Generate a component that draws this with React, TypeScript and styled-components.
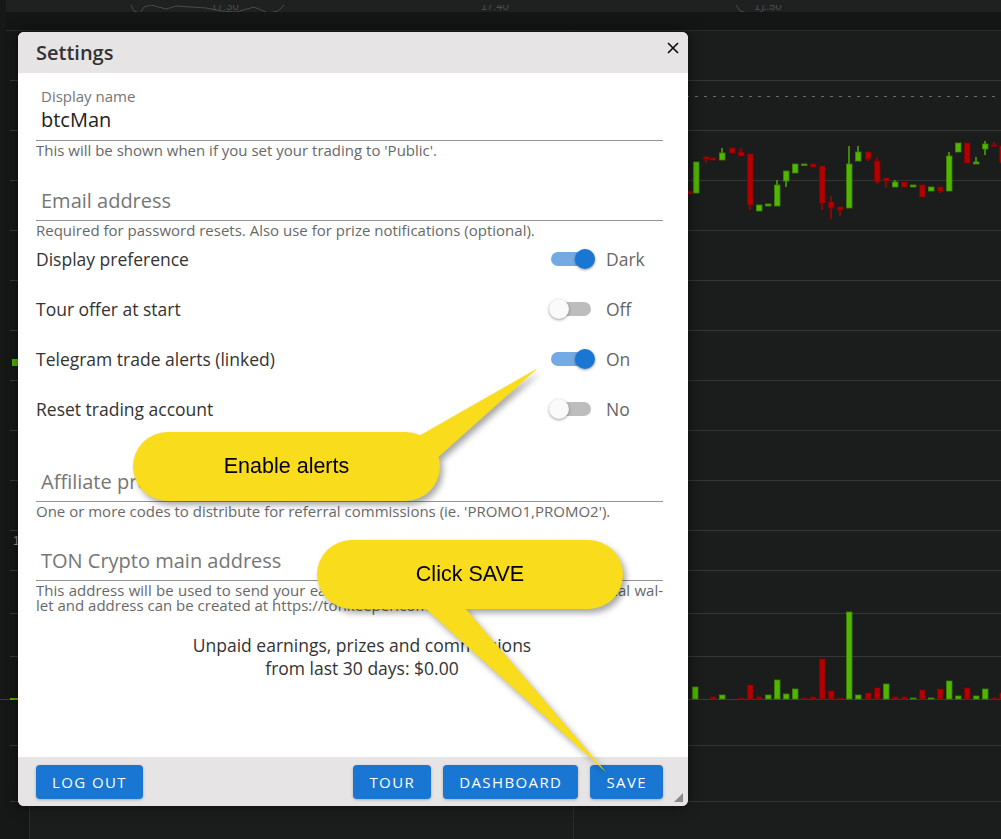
import React from 'react';
import styled, { createGlobalStyle } from 'styled-components';

const GlobalStyle = createGlobalStyle`
  html, body {
    margin: 0;
    padding: 0;
    background: #161717;
  }
  body {
    font-family: 'Open Sans', 'Liberation Sans', sans-serif;
  }
  * {
    box-sizing: border-box;
  }
`;

type Candle = [number, number, number, number, number, 'g' | 'r'];
type Bar = [number, number, 'g' | 'r'];

const candles: Candle[] = [
  [686, 191, 194, 191, 194, 'r'],
  [693, 162, 193, 162, 193, 'g'],
  [703, 157, 159, 156, 163, 'r'],
  [710, 158, 160, 158, 160, 'r'],
  [719, 153, 160, 148, 160, 'g'],
  [729, 148, 153, 148, 153, 'r'],
  [738, 152, 156, 148, 156, 'r'],
  [747, 154, 205, 154, 210, 'r'],
  [756, 205, 211, 205, 211, 'g'],
  [765, 204, 206, 204, 206, 'g'],
  [774, 185, 206, 180, 206, 'g'],
  [783, 171, 181, 171, 187, 'g'],
  [792, 164, 173, 164, 173, 'g'],
  [801, 164, 165, 164, 165, 'g'],
  [810, 164, 167, 164, 167, 'r'],
  [819, 166, 203, 166, 210, 'r'],
  [828, 202, 208, 196, 219, 'r'],
  [837, 207, 210, 207, 216, 'r'],
  [846, 164, 208, 146, 208, 'g'],
  [855, 152, 161, 146, 161, 'g'],
  [865, 152, 159, 152, 161, 'r'],
  [874, 161, 182, 157, 184, 'r'],
  [883, 178, 181, 178, 188, 'r'],
  [892, 182, 187, 180, 187, 'g'],
  [901, 182, 187, 182, 187, 'r'],
  [910, 185, 187, 185, 187, 'g'],
  [919, 185, 197, 185, 197, 'r'],
  [928, 187, 191, 187, 191, 'g'],
  [937, 187, 191, 187, 193, 'r'],
  [946, 156, 191, 152, 191, 'g'],
  [955, 143, 152, 143, 152, 'g'],
  [964, 143, 163, 143, 163, 'r'],
  [973, 162, 164, 157, 164, 'g'],
  [982, 144, 149, 141, 155, 'g'],
  [991, 145, 146, 142, 146, 'r'],
  [999, 146, 163, 146, 163, 'r'],
];

const volumes: Bar[] = [
  [692, 687, 'g'], [710, 697, 'r'], [719, 695, 'g'], [738, 698, 'r'], [747, 685, 'r'],
  [756, 697, 'r'], [765, 695, 'g'], [774, 680, 'g'], [783, 694, 'g'], [792, 689, 'g'],
  [801, 698, 'r'], [810, 697, 'r'], [819, 659, 'r'], [828, 691, 'r'], [837, 698, 'r'],
  [846, 612, 'g'], [855, 695, 'g'], [865, 693, 'r'], [874, 688, 'r'], [883, 684, 'g'],
  [892, 697, 'r'], [901, 697, 'r'], [910, 698, 'g'], [919, 690, 'r'], [928, 698, 'g'],
  [937, 689, 'r'], [946, 681, 'g'], [955, 696, 'g'], [964, 688, 'r'], [973, 696, 'g'],
  [982, 689, 'g'], [991, 698, 'r'], [999, 693, 'r'],
];

const FILL = { g: '#52b500', r: '#b30000' };
const EDGE = { g: '#3b8500', r: '#860000' };

const gridRows = [80, 130, 180, 230, 280, 330, 380, 430, 480, 530, 570, 613, 656, 745, 801];

const Page = styled.div`
  position: relative;
  width: 100vw;
  height: 100vh;
  overflow: hidden;
  display: flex;
  flex-direction: column;
  background: #161717;
`;

const TopStrip = styled.div`
  height: 12px;
  margin-left: 6px;
  background: #1f2020;
  overflow: hidden;
`;

const Band = styled.div`
  height: 19px;
  margin-left: 6px;
  background: #141515;
  border-bottom: 1px solid #2c2d2d;
`;

const ChartSvg = styled.svg`
  display: block;
  flex: 1;
`;

const Dialog = styled.div`
  position: absolute;
  left: 18px;
  top: 32px;
  width: 670px;
  height: 774px;
  display: flex;
  flex-direction: column;
  background: #ffffff;
  border-radius: 6px;
  overflow: hidden;
  box-shadow: 0 0 14px rgba(0, 0, 0, 0.55);
`;

const Header = styled.div`
  height: 41px;
  flex: none;
  display: flex;
  justify-content: space-between;
  align-items: center;
  padding: 0 9px 0 18px;
  background: #e6e4e5;
`;

const Title = styled.div`
  font-size: 20px;
  font-weight: 600;
  color: #333333;
`;

const CloseButton = styled.button`
  align-self: flex-start;
  margin-top: 10px;
  width: 12px;
  height: 12px;
  padding: 0;
  border: none;
  background: none;
  display: flex;
  cursor: pointer;
`;

const Body = styled.div`
  flex: 1;
  display: flex;
  flex-direction: column;
  padding: 0 25px 0 18px;
`;

const Field = styled.div<{ $top: number }>`
  padding-top: ${p => p.$top}px;
`;

const FieldLabel = styled.div`
  font-size: 15px;
  line-height: 18px;
  color: #757575;
  padding-left: 5px;
`;

const InputLine = styled.div<{ $placeholder?: boolean }>`
  margin-top: ${p => (p.$placeholder ? 0 : 2)}px;
  padding: 0 5px ${p => (p.$placeholder ? 6 : 7)}px;
  font-size: 20px;
  line-height: 26px;
  color: ${p => (p.$placeholder ? '#767676' : '#222222')};
  border-bottom: 1px solid #949494;
`;

const Helper = styled.div`
  margin-top: 2px;
  font-size: 15px;
  line-height: 15px;
  color: #686868;
`;

const JustifiedLine = styled.div`
  text-align: justify;
  text-align-last: justify;
  white-space: nowrap;
`;

const ToggleList = styled.div`
  display: flex;
  flex-direction: column;
  gap: 8px;
`;

const ToggleRow = styled.div`
  height: 42px;
  display: flex;
  align-items: center;
`;

const RowLabel = styled.div`
  flex: 1;
  font-size: 17.5px;
  color: #333333;
`;

const SwitchArea = styled.div`
  width: 112px;
  display: flex;
  align-items: center;
  gap: 15px;
`;

const Track = styled.span<{ $on: boolean }>`
  position: relative;
  width: 40px;
  height: 14px;
  border-radius: 7px;
  background: ${p => (p.$on ? '#74aae4' : '#bdbdbd')};
`;

const Thumb = styled.span<{ $on: boolean }>`
  position: absolute;
  top: -3px;
  left: ${p => (p.$on ? 24 : -2)}px;
  width: 20px;
  height: 20px;
  border-radius: 50%;
  background: ${p => (p.$on ? '#1976d2' : '#fafafa')};
  box-shadow: 0 1px 3px rgba(0, 0, 0, 0.4);
`;

const SwitchText = styled.span`
  font-size: 17.5px;
  color: #666666;
`;

const Summary = styled.div`
  margin-top: 21px;
  padding-left: 25px;
  text-align: center;
  font-size: 17.5px;
  line-height: 23px;
  color: #333333;
`;

const Footer = styled.div`
  position: relative;
  height: 49px;
  flex: none;
  display: flex;
  align-items: center;
  gap: 12px;
  padding: 0 25px 0 18px;
  background: #e6e4e5;
`;

const Spacer = styled.div`
  flex: 1;
`;

const Button = styled.button`
  height: 34px;
  padding: 0 16px;
  border: none;
  border-radius: 4px;
  background: #1976d2;
  color: #ffffff;
  font-family: 'Open Sans', 'Liberation Sans', sans-serif;
  font-size: 15px;
  font-weight: 500;
  letter-spacing: 1.4px;
  text-transform: uppercase;
  box-shadow: 0 1px 3px rgba(0, 0, 0, 0.25);
  cursor: pointer;
`;

const Grip = styled.svg`
  position: absolute;
  right: 5px;
  bottom: 4px;
`;

const CalloutBox = styled.div<{ $x: number; $y: number; $w: number; $h: number }>`
  position: absolute;
  left: ${p => p.$x}px;
  top: ${p => p.$y}px;
  width: ${p => p.$w}px;
  height: ${p => p.$h}px;
  filter: drop-shadow(3px 4px 3px rgba(0, 0, 0, 0.35));
`;

const Pill = styled.div`
  position: relative;
  width: 100%;
  height: 100%;
  border-radius: 999px;
  background: #f9dc1c;
  display: flex;
  align-items: center;
  justify-content: center;
  font-family: 'Liberation Sans', Arial, sans-serif;
  font-size: 21.5px;
  color: #000000;
`;

const Tail = styled.svg`
  position: absolute;
  left: 0;
  top: 0;
  overflow: visible;
`;

type CalloutProps = {
  x: number;
  y: number;
  w: number;
  h: number;
  tail: [number, number][];
  text: string;
};

const Callout = ({ x, y, w, h, tail, text }: CalloutProps) => (
  <CalloutBox $x={x} $y={y} $w={w} $h={h}>
    <Tail width={w} height={h}>
      <polygon points={tail.map(([px, py]) => `${px - x},${py - y}`).join(' ')} fill="#f9dc1c" />
    </Tail>
    <Pill>{text}</Pill>
  </CalloutBox>
);

const Switch = ({ on, text }: { on: boolean; text: string }) => (
  <SwitchArea>
    <Track $on={on}>
      <Thumb $on={on} />
    </Track>
    <SwitchText>{text}</SwitchText>
  </SwitchArea>
);

const toggles = [
  { label: 'Display preference', on: true, text: 'Dark' },
  { label: 'Tour offer at start', on: false, text: 'Off' },
  { label: 'Telegram trade alerts (linked)', on: true, text: 'On' },
  { label: 'Reset trading account', on: false, text: 'No' },
];

const ChartBackdrop = () => (
  <ChartSvg width={1001} height={808} viewBox="0 31 1001 808">
    <rect x={29} y={31} width={972} height={808} fill="#1b1c1c" />
    <line x1={29.5} y1={31} x2={29.5} y2={839} stroke="#2b2c2c" />
    <line x1={573.5} y1={31} x2={573.5} y2={839} stroke="#2b2c2c" />
    {gridRows.map(y => (
      <g key={y}>
        <line x1={29} y1={y + 0.5} x2={1001} y2={y + 0.5} stroke="#343535" />
        <line x1={10} y1={y + 0.5} x2={29} y2={y + 0.5} stroke="#3a3b3b" />
      </g>
    ))}
    <line x1={29} y1={96.5} x2={1001} y2={96.5} stroke="#6a6a6a" strokeDasharray="3 6" />
    <line x1={0} y1={699.5} x2={1001} y2={699.5} stroke="#3a3b3b" />
    <line x1={10} y1={699} x2={18} y2={699} stroke="#52b500" strokeWidth={2} />
    <rect x={12} y={359} width={8} height={7} fill="#52b500" />
    <text x={13} y={545} fill="#9a9a9a" fontSize={12} fontFamily="'Liberation Sans', sans-serif">1</text>
    {candles.map(([x, top, bottom, wt, wb, c]) => (
      <g key={x}>
        <line x1={x + 3} y1={wt} x2={x + 3} y2={wb} stroke={FILL[c]} strokeWidth={1.4} />
        <rect x={x + 0.5} y={top} width={5.5} height={Math.max(bottom - top, 1.5)} fill={FILL[c]} stroke={EDGE[c]} strokeWidth={0.8} />
      </g>
    ))}
    {volumes.map(([x, top, c]) => (
      <rect key={x} x={x + 0.5} y={top} width={5.5} height={699 - top} fill={FILL[c]} stroke={EDGE[c]} strokeWidth={0.8} />
    ))}
  </ChartSvg>
);

export default function App() {
  return (
    <Page>
      <GlobalStyle />
      <TopStrip>
        <svg width={995} height={12}>
          <polyline points="125,0 128,6 134,8 138,2 145,0 160,4 170,1 200,3 215,6 230,7 248,2 262,8 272,6 278,0" fill="none" stroke="#4a4b4b" />
          <polyline points="730,0 734,6 742,8 752,8 760,4" fill="none" stroke="#4a4b4b" />
          <text x={205} y={5} fill="#4e4f4f" fontSize={11} fontFamily="'Liberation Sans', sans-serif">17:30</text>
          <text x={475} y={5} fill="#4e4f4f" fontSize={11} fontFamily="'Liberation Sans', sans-serif">17:40</text>
          <text x={748} y={5} fill="#4e4f4f" fontSize={11} fontFamily="'Liberation Sans', sans-serif">17:50</text>
        </svg>
      </TopStrip>
      <Band />
      <ChartBackdrop />

      <Dialog>
        <Header>
          <Title>Settings</Title>
          <CloseButton aria-label="Close">
            <svg width={12} height={12} viewBox="0 0 12 12">
              <path d="M1 1 L11 11 M11 1 L1 11" stroke="#111" strokeWidth={1.7} />
            </svg>
          </CloseButton>
        </Header>

        <Body>
          <Field $top={14}>
            <FieldLabel>Display name</FieldLabel>
            <InputLine>btcMan</InputLine>
            <Helper>This will be shown when if you set your trading to 'Public'.</Helper>
          </Field>

          <Field $top={30}>
            <InputLine $placeholder>Email address</InputLine>
            <Helper>Required for password resets. Also use for prize notifications (optional).</Helper>
          </Field>

          <ToggleList>
            {toggles.map(t => (
              <ToggleRow key={t.label}>
                <RowLabel>{t.label}</RowLabel>
                <Switch on={t.on} text={t.text} />
              </ToggleRow>
            ))}
          </ToggleList>

          <Field $top={39}>
            <InputLine $placeholder>Affiliate promo codes</InputLine>
            <Helper>One or more codes to distribute for referral commissions (ie. 'PROMO1,PROMO2').</Helper>
          </Field>

          <Field $top={29}>
            <InputLine $placeholder>TON Crypto main address</InputLine>
            <Helper>
              <JustifiedLine>This address will be used to send your earnings, prizes and commissions. A personal wal-</JustifiedLine>
              <div>let and address can be created at https://tonkeeper.com.</div>
            </Helper>
          </Field>

          <Summary>
            Unpaid earnings, prizes and commissions
            <br />
            from last 30 days: $0.00
          </Summary>
        </Body>

        <Footer>
          <Button>Log out</Button>
          <Spacer />
          <Button>Tour</Button>
          <Button>Dashboard</Button>
          <Button>Save</Button>
          <Grip width={9} height={9} viewBox="0 0 9 9">
            <polygon points="9,0 9,9 0,9" fill="#8a8a8a" />
          </Grip>
        </Footer>
      </Dialog>

      <Callout
        x={133}
        y={432}
        w={307}
        h={69}
        text="Enable alerts"
        tail={[[410, 441], [538, 368], [425, 469]]}
      />
      <Callout
        x={317}
        y={540}
        w={306}
        h={69}
        text="Click SAVE"
        tail={[[416, 600], [606, 772], [458, 600]]}
      />
    </Page>
  );
}
